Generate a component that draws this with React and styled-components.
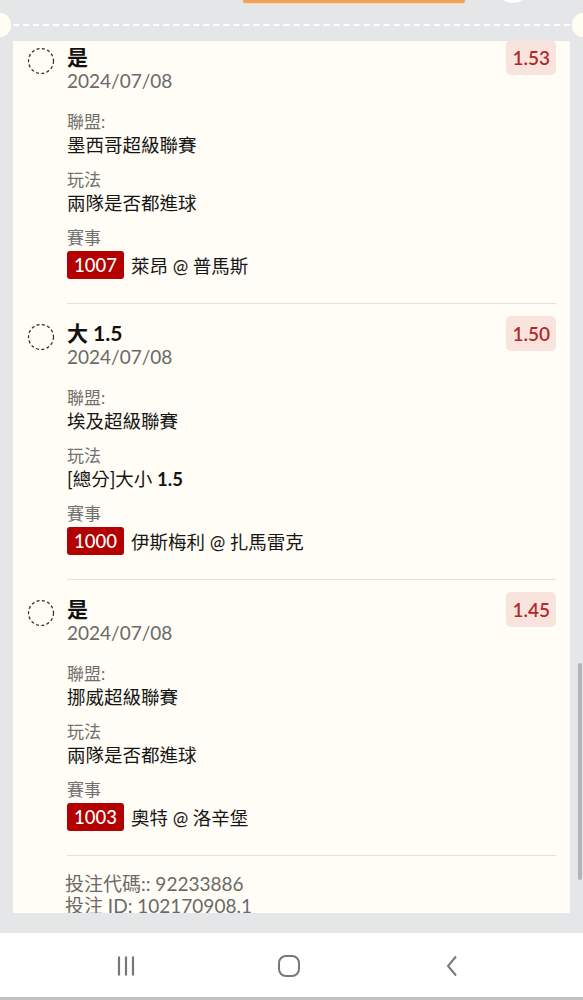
import React from 'react';
import styled, { createGlobalStyle } from 'styled-components';

const GlobalStyle = createGlobalStyle`
    html, body {
        margin: 0;
        padding: 0;
        background: #e4e6e8;
    }
    body {
        font-family: Lato, "Noto Sans CJK TC", sans-serif;
    }
`;

const bets = [
    { pick: '是', date: '2024/07/08', odds: '1.53', league: '墨西哥超級聯賽', market: '兩隊是否都進球', code: '1007', match: '萊昂 @ 普馬斯' },
    { pick: '大 1.5', date: '2024/07/08', odds: '1.50', league: '埃及超級聯賽', market: '[總分]大小', line: '1.5', code: '1000', match: '伊斯梅利 @ 扎馬雷克' },
    { pick: '是', date: '2024/07/08', odds: '1.45', league: '挪威超級聯賽', market: '兩隊是否都進球', code: '1003', match: '奧特 @ 洛辛堡' },
];

const Screen = styled.div`
    width: 583px;
    height: 1000px;
    display: flex;
    flex-direction: column;
    background: #e4e6e8;
    overflow: hidden;

    & > * {
        flex-shrink: 0;
    }
`;

const TopRow = styled.div`
    height: 4px;
    display: flex;
    align-items: flex-end;
    overflow: hidden;
`;

const OrangeButton = styled.div`
    width: 222px;
    height: 40px;
    margin-left: 243px;
    background: #f0a458;
    border-bottom: 1px solid #f3d9b8;
    border-radius: 0 0 3px 3px;
`;

const WhiteDot = styled.div`
    width: 32px;
    height: 32px;
    margin-left: 32px;
    margin-bottom: 1px;
    border-radius: 50%;
    background: #ffffff;
`;

const Perforation = styled.div`
    margin-top: 9px;
    height: 24px;
    display: flex;
    align-items: center;
`;

const Notch = styled.div`
    width: 11px;
    height: 24px;
    background: #fffdf2;
    border-radius: ${p => (p.$side === 'left' ? '0 12px 12px 0' : '12px 0 0 12px')};
`;

const Dashes = styled.div`
    flex: 1;
    height: 0;
    margin: 0 2px;
    border-top: 2px dashed #ffffff;
`;

const Middle = styled.div`
    margin-top: 4px;
    display: flex;
`;

const Card = styled.div`
    width: 557px;
    height: 872px;
    margin-left: 13px;
    background: #fffdf5;
    overflow: hidden;
`;

const ScrollContent = styled.div`
    margin-top: -13px;
    padding: 0 14px;
`;

const Gutter = styled.div`
    flex: 1;
`;

const ScrollThumb = styled.div`
    width: 4px;
    height: 217px;
    margin: 622px 0 0 8px;
    background: #b3b3b3;
    border-radius: 2px;
`;

const Item = styled.div`
    display: flex;
    gap: 12px;
`;

const Radio = styled.svg`
    flex: none;
    width: 28px;
    height: 28px;
    margin-top: 19px;
`;

const Body = styled.div`
    flex: 1;
    padding: 12px 0 24px;
    border-bottom: 1px solid #e3e1da;
`;

const Header = styled.div`
    display: flex;
    justify-content: space-between;
    align-items: flex-start;
    margin-bottom: 18px;
`;

const TitleBlock = styled.div`
    margin-top: 5px;
`;

const Title = styled.div`
    font-size: 21px;
    line-height: 24px;
    font-weight: 700;
    color: #111;
`;

const DateText = styled.div`
    font-size: 19px;
    line-height: 24px;
    color: #6a6a6a;
`;

const Odds = styled.div`
    height: 35px;
    padding: 0 6px;
    display: flex;
    align-items: center;
    background: #f9e4dd;
    border-radius: 5px;
    font-size: 19px;
    font-weight: 600;
    color: #b2282c;
`;

const Group = styled.div`
    & + & {
        margin-top: 12px;
    }
`;

const Label = styled.div`
    font-size: 17px;
    line-height: 22px;
    color: #707070;
`;

const Value = styled.div`
    font-size: 18.5px;
    line-height: 24px;
    color: #161616;
`;

const EventRow = styled.div`
    margin-top: 2px;
    display: flex;
    align-items: center;
    gap: 7px;
`;

const Code = styled.span`
    height: 28px;
    padding: 0 7px;
    display: inline-flex;
    align-items: center;
    background: #b30000;
    border-radius: 3px;
    color: #ffffff;
    font-size: 18.5px;
    font-weight: 500;
`;

const MatchName = styled.span`
    font-size: 18.5px;
    color: #161616;
`;

const Footer = styled.div`
    padding: 17px 0 0 38px;
    font-size: 19px;
    line-height: 22px;
    color: #6a6a6a;
`;

const NavBar = styled.div`
    margin-top: 20px;
    height: 64px;
    padding-right: 6px;
    display: flex;
    justify-content: center;
    align-items: center;
    gap: 139px;
    background: #ffffff;
    border-bottom: 3px solid #c2c2c2;
`;

const NavIcon = styled.svg`
    width: 24px;
    height: 24px;
    margin-top: 1px;
`;

const DashedCircle = () => (
    <Radio viewBox="0 0 28 28">
        <circle cx="14" cy="14" r="12.5" fill="none" stroke="#2a2a2a" strokeWidth="1.2" strokeDasharray="3 2.4" />
    </Radio>
);

const BetItem = ({ bet }) => (
    <Item>
        <DashedCircle />
        <Body>
            <Header>
                <TitleBlock>
                    <Title>{bet.pick}</Title>
                    <DateText>{bet.date}</DateText>
                </TitleBlock>
                <Odds>{bet.odds}</Odds>
            </Header>
            <Group>
                <Label>聯盟:</Label>
                <Value>{bet.league}</Value>
            </Group>
            <Group>
                <Label>玩法</Label>
                <Value>
                    {bet.market}
                    {bet.line && <> <b>{bet.line}</b></>}
                </Value>
            </Group>
            <Group>
                <Label>賽事</Label>
                <EventRow>
                    <Code>{bet.code}</Code>
                    <MatchName>{bet.match}</MatchName>
                </EventRow>
            </Group>
        </Body>
    </Item>
);

export default function App() {
    return (
        <>
            <GlobalStyle />
            <Screen>
                <TopRow>
                    <OrangeButton />
                    <WhiteDot />
                </TopRow>
                <Perforation>
                    <Notch $side="left" />
                    <Dashes />
                    <Notch $side="right" />
                </Perforation>
                <Middle>
                    <Card>
                        <ScrollContent>
                            {bets.map((b, i) => <BetItem key={i} bet={b} />)}
                            <Footer>
                                <div>投注代碼:: 92233886</div>
                                <div>投注 ID: 102170908.1</div>
                            </Footer>
                        </ScrollContent>
                    </Card>
                    <Gutter>
                        <ScrollThumb />
                    </Gutter>
                </Middle>
                <NavBar>
                    <NavIcon viewBox="0 0 24 24">
                        <path d="M5 2.5v19M12 2.5v19M19 2.5v19" stroke="#777" strokeWidth="2.2" fill="none" />
                    </NavIcon>
                    <NavIcon viewBox="0 0 24 24">
                        <rect x="2" y="2" width="20" height="20" rx="7" stroke="#777" strokeWidth="2" fill="none" />
                    </NavIcon>
                    <NavIcon viewBox="0 0 24 24">
                        <path d="M16 2.5L8 12l8 9.5" stroke="#777" strokeWidth="2" fill="none" />
                    </NavIcon>
                </NavBar>
            </Screen>
        </>
    );
}
